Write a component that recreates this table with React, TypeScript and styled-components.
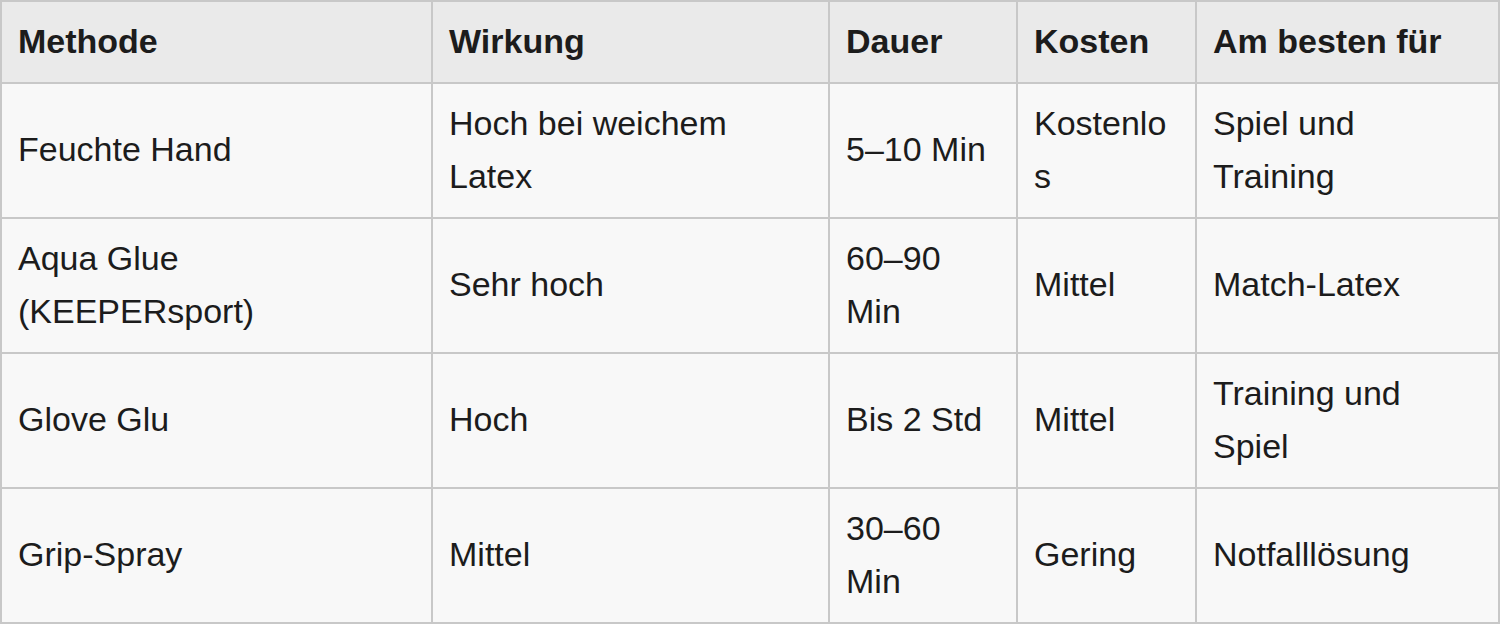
import { ReactElement } from 'react';
import styled, { createGlobalStyle } from 'styled-components';

const GlobalStyle = createGlobalStyle`
  html, body {
    margin: 0;
    padding: 0;
    background: #ffffff;
  }
  body {
    font-family: 'Liberation Sans', Arial, Helvetica, sans-serif;
    color: #1c1c1c;
  }
`;

interface Row {
  methode: string;
  wirkung: string;
  dauer: string;
  kosten: string;
  bestFor: string;
}

const COLUMNS = ['Methode', 'Wirkung', 'Dauer', 'Kosten', 'Am besten für'];
const COL_WIDTHS = [431, 397, 188, 179, 303];

const ROWS: Row[] = [
  {
    methode: 'Feuchte Hand',
    wirkung: 'Hoch bei weichem Latex',
    dauer: '5–10 Min',
    kosten: 'Kostenlos',
    bestFor: 'Spiel und Training',
  },
  {
    methode: 'Aqua Glue (KEEPERsport)',
    wirkung: 'Sehr hoch',
    dauer: '60–90 Min',
    kosten: 'Mittel',
    bestFor: 'Match-Latex',
  },
  {
    methode: 'Glove Glu',
    wirkung: 'Hoch',
    dauer: 'Bis 2 Std',
    kosten: 'Mittel',
    bestFor: 'Training und Spiel',
  },
  {
    methode: 'Grip-Spray',
    wirkung: 'Mittel',
    dauer: '30–60 Min',
    kosten: 'Gering',
    bestFor: 'Notfalllösung',
  },
];

const App = (): ReactElement => {
  return (
    <>
      <GlobalStyle />
      <StyledTable>
        <colgroup>
          {COL_WIDTHS.map((w, i) => (
            <col key={i} style={{ width: w }} />
          ))}
        </colgroup>
        <thead>
          <tr>
            {COLUMNS.map((c) => (
              <HeaderCell key={c}>{c}</HeaderCell>
            ))}
          </tr>
        </thead>
        <tbody>
          {ROWS.map((r) => (
            <tr key={r.methode}>
              <Cell>{r.methode}</Cell>
              <Cell>{r.wirkung}</Cell>
              <Cell>{r.dauer}</Cell>
              <Cell>{r.kosten}</Cell>
              <Cell>{r.bestFor}</Cell>
            </tr>
          ))}
        </tbody>
      </StyledTable>
    </>
  );
};

export default App;

const StyledTable = styled.table`
  width: 1498px;
  table-layout: fixed;
  border-collapse: collapse;
  border: 2px solid #c8c8c8;
  background: #f8f8f8;
  font-size: 34px;
  line-height: 53.5px;
`;

const HeaderCell = styled.th`
  background: #eaeaea;
  border: 2px solid #c8c8c8;
  padding: 13px 16px;
  text-align: left;
  font-weight: bold;
  color: #1c1c1c;
  vertical-align: middle;
`;

const Cell = styled.td`
  border: 2px solid #c8c8c8;
  padding: 13px 16px;
  text-align: left;
  vertical-align: middle;
  overflow-wrap: break-word;
  color: #1c1c1c;
`;
